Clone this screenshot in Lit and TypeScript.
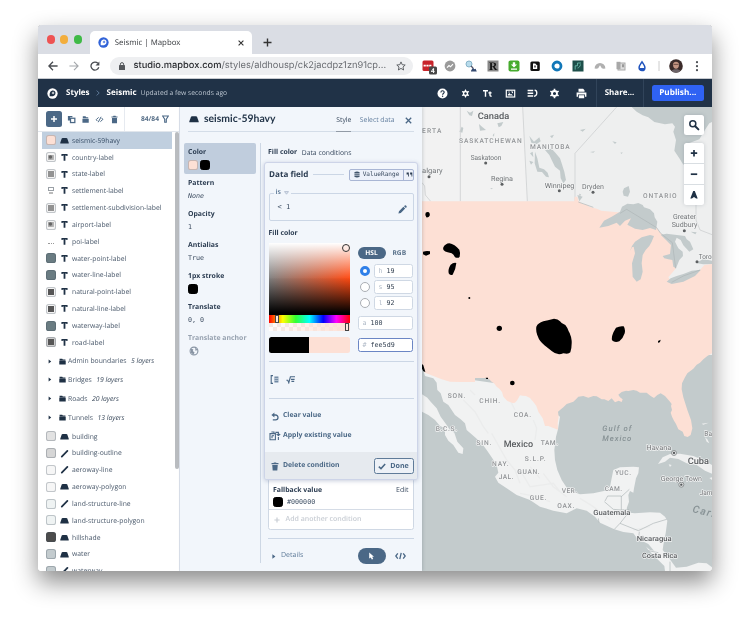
import { LitElement, html, svg, css } from "lit";
import { customElement } from "lit/decorators.js";

const glyph: Record<string, any> = {
  fill: svg`<path d="M3 2.2h4q.8 0 1.1.7L9.7 7.4v.9H.3v-.9L1.9 2.9q.3-.7 1.1-.7z" fill="#1f3145"/>`,
  text: svg`<path d="M1.6 1.2h6.8v2.1H7.2L6.9 2.8H6v5.8H4V2.8H3.1l-.3.5H1.6z" fill="#1f3145"/>`,
  line: svg`<path d="M2 8.4 8.2 2.2" stroke="#1f3145" stroke-width="2" stroke-linecap="round"/>`,
  folder: svg`<path d="M.8 1h3.8l.9 1.1h3.7v1.3H.8zM.4 4h9.2v5.2H.4z" fill="#1f3145"/>`,
};
const icon = (k: string, size = 9) => html`<svg width=${size} height=${size} viewBox="0 0 10 10">${glyph[k]}</svg>`;

type Layer = [string, string, string, string];
const layersTop: Layer[] = [
  ["seismic-59havy", "fill", "pink", ""],
  ["country-label", "text", "light-sw", "in-mark"],
  ["state-label", "text", "light-sw", "in-mid"],
  ["settlement-label", "text", "bare", "in-shield"],
  ["settlement-subdivision-label", "text", "light-sw", "in-mid"],
  ["airport-label", "text", "light-sw", "in-mark"],
  ["poi-label", "text", "bare", "in-dots"],
  ["water-point-label", "text", "teal", ""],
  ["water-line-label", "text", "teal", ""],
  ["natural-point-label", "text", "light-sw", "in-dark"],
  ["natural-line-label", "text", "light-sw", "in-dark"],
  ["waterway-label", "text", "teal", ""],
  ["road-label", "text", "grey-sw", "in-dark"],
];
const folders = [["Admin boundaries", "5 layers"], ["Bridges", "19 layers"], ["Roads", "20 layers"], ["Tunnels", "13 layers"]];
const layersEnd: Layer[] = [
  ["building", "fill", "g1", ""],
  ["building-outline", "line", "g2", ""],
  ["aeroway-line", "line", "g3", ""],
  ["aeroway-polygon", "fill", "g3", ""],
  ["land-structure-line", "line", "g4", ""],
  ["land-structure-polygon", "fill", "g4", ""],
  ["hillshade", "fill", "g5", ""],
  ["water", "fill", "g6", ""],
  ["waterway", "line", "g6", ""],
];

@customElement("map-view")
class MapView extends LitElement {
  static styles = css`
    :host { display: block; position: relative; width: 290px; height: 464px; overflow: hidden; }
    svg { display: block; }
    text { font-family: Roboto, "Open Sans", sans-serif; text-rendering: geometricPrecision; paint-order: stroke; stroke: #f3f4f4; stroke-width: 4px; stroke-linejoin: round; }
    .st { font-size: 20px; fill: #929497; font-weight: 500; }
    .city { font-size: 21px; fill: #707376; }
    .country { font-size: 27px; fill: #5a5d60; font-weight: 500; }
    .small { font-size: 21.5px; fill: #5a5d60; font-weight: 500; }
    .sea { font-size: 23px; fill: #869194; font-style: italic; stroke: none; font-weight: 500; }
    .big { font-size: 31px; }
    .ctl { position: absolute; right: 8px; width: 20px; background: #fff; border-radius: 2.5px; box-shadow: 0 0 4px rgba(30, 50, 70, .18); display: grid; }
    .ctl svg { width: 20px; height: 20px; }
    .search { top: 8px; }
    .zoom { top: 36px; }
    .zoom svg + svg { border-top: 1px solid #d9dee2; }
  `;
  t(c: string, x: number, y: number, w: number, s: string) {
    return svg`<text class=${c} x=${x} y=${y} textLength=${w} lengthAdjust=${c === "st" || c === "sea" ? "spacing" : "spacingAndGlyphs"}>${s}</text>`;
  }
  render() {
    const dots = [[197, 189], [246, 253], [27, 230], [418, 272], [519, 277], [793, 392], [831, 485]];
    return html`
      <svg width="290" height="464" viewBox="6 21 870 1392">
        <rect x="0" y="0" width="880" height="780" fill="#eeefef"/>
        <path d="M121 21H308L322 304H6V21z" fill="#f2f2f2"/>
        <rect x="0" y="765" width="880" height="660" fill="#c3cbcc"/>
        <g fill="#c3cbcc">
          <path d="M635 21 650 35 668 46 685 52 703 66 735 73 757 70 765 80 760 95 768 120 763 152 778 175 790 194 800 185 806 130 838 118 860 82 868 70 876 66V21z"/>
          <path d="M375 150 395 146 406 158 420 175 425 190 433 215 438 240 430 250 422 235 420 212 405 200 395 180 388 165z"/>
          <path d="M328 108 342 125 358 112 362 124 350 132 334 128zM345 155 352 175 358 203 372 208 383 218 387 232 378 230 366 216 352 215 344 190z"/>
          <path d="M140 32 150 38 160 32 156 48 148 46zM232 70 250 66 244 78 236 82zM177 72 186 80 198 90 180 92zM125 80 130 84 127 98 118 95zM480 90 497 86 488 95zM510 156 525 154 520 158zM577 124 590 127 585 132zM612 265 626 258 630 275 624 290 611 287 608 275zM390 108 402 104 396 115zM218 106 223 99 222 110zM330 160 338 155 340 172zM328 182 340 186 333 194zM601 158 608 157 605 162zM210 265 218 264 216 268z"/>
        </g>
        <path d="M121 21V304M308 21 322 304M590 21 465 160V304M6 248 14 258 16 285 32 304M828 310V360L840 390 876 404" fill="none" stroke="#cfd1d2" stroke-width="2.5"/>
        <path d="M10 812 90 830 300 860 420 950 414 988 408 1010 403 1050 405 1080 412 1110 425 1140 445 1170 480 1183 520 1180 555 1172 570 1160 575 1135 580 1110 600 1102 640 1100 657 1102 655 1120 648 1135 642 1165 640 1178 630 1173 625 1185 627 1205 620 1225 628 1238 645 1240 690 1237 720 1238 735 1250 742 1262 737 1300 730 1335 728 1350 740 1365 755 1385 768 1403 800 1400 835 1388 860 1390 876 1402V1413H735L733 1398 705 1370 685 1350 672 1330 655 1320 640 1300 610 1296 583 1288 540 1268 525 1250 500 1232 470 1225 440 1240 400 1232 360 1220 330 1200 290 1185 260 1165 235 1148 225 1130 235 1118 230 1095 215 1072 200 1050 185 1030 165 1012 140 990 135 970 122 958 105 945 85 915 70 905 62 880 52 870 50 848 40 835 15 828z" fill="#f1f2f2"/>
        <path d="M6 883 22 893 32 905 50 925 62 950 80 975 90 990 103 998 112 1025 130 1045 128 1062 115 1058 100 1035 85 1022 75 1005 75 985 60 978 45 960 25 945 6 935z" fill="#f1f2f2"/>
        <path d="M714 1092 728 1072 750 1062 780 1061 820 1068 850 1080 876 1095V1121L855 1112 830 1095 800 1090 775 1077 750 1073 735 1085zM746 1093 755 1095 750 1101zM855 1012 862 1018 868 1030 860 1025zM868 1134 876 1132V1140zM845 971 866 968 850 974z" fill="#eff0f0"/>
        <path d="M660 1320 685 1332 702 1352 690 1350 672 1335z" fill="#c3cbcc"/>
        <path d="M130 900 165 935 190 980 205 1000M340 960 350 985 345 1020M215 1000 260 1080 285 1110 300 1150M300 1110 330 1160 400 1150 420 1175M370 1120 400 1160 440 1190M300 1180 350 1190 390 1205M480 1195 520 1220 570 1260M270 900 285 930M150 870 165 885M640 1290 690 1280M330 1100 360 1135" fill="none" stroke="#ebecec" stroke-width="4"/>
        <path d="M6 304H463L464 290H472L476 304 488 312 500 314 508 320 530 326 544 332 560 334 585 336 610 338 620 328 710 385 722 400 757 425 768 505 745 532 755 547 838 512 853 495 876 492V760L862 768 850 778 840 788 830 794 820 806 812 812 802 820 795 832 786 850 785 868 790 892 802 930 813 960 817 985 812 1005 803 1011 793 1008 788 995 775 988 768 972 762 962 756 950 752 938 756 930 753 918 755 912 750 905 735 888 722 880 712 885 702 894 692 888 680 878 660 878 650 872 640 870 625 873 618 872 605 876 595 884 600 892 608 898 605 906 596 902 585 907 575 895 565 903 553 898 545 898 530 889 520 888 505 893 490 888 475 890 468 898 460 905 440 912 430 922 420 930 414 935 416 950 413 970 414 989 398 983 385 978 375 978 368 955 355 935 349 918 343 910 330 894 318 888 308 887 300 886 292 900 285 908 278 909 262 903 250 890 246 876 238 866 230 860 222 850 215 845 206 836 200 834 165 834V846H120L90 845 65 838 15 818 6 805z" fill="#fde0d5"/>
        <g fill="#c3cbcc">
          <path d="M538 383 552 362 575 350 600 335 606 320 622 311 640 313 655 309 668 315 672 322 690 328 702 340 704 352 712 365 708 390 690 384 668 390 645 386 622 374 628 364 633 355 615 362 600 378 590 368 565 378z"/>
          <path d="M702 408 695 425 688 438 677 450 668 465 665 490 668 515 662 538 650 545 638 530 636 490 645 460 641 440 636 442 630 453 636 438 645 425 665 412 690 405z"/>
          <path d="M722 404 740 401 795 408 800 418 810 425 820 448 808 455 790 436 782 420 770 413 765 425 775 445 788 455 789 468 778 480 768 505 760 500 757 480 745 478 733 475 728 468 750 462 753 435 738 420z"/>
          <path d="M740 545 752 535 770 528 790 522 815 512 843 509 825 528 790 545 755 552z"/>
          <path d="M828 489 850 477 876 482V492L850 493zM812 395 830 397 826 403zM472 285 488 290 478 304zM477 281 483 283 480 290z"/>
        </g>
        <path d="M600 340 620 328 710 383 722 400 757 428 767 505M755 547 790 528 840 510M475 306 520 322M555 1203 563 1188H604V1230L580 1228 553 1205M604 1190 628 1168M604 1230 625 1228M583 1288 600 1270 620 1245 626 1228M600 1270 655 1292 670 1285 700 1270 740 1258M655 1320 658 1295M685 1352 715 1358M750 1385V1413M535 1255 537 1268" fill="none" stroke="#aeb5b7" stroke-width="2"/>
        <g fill="#000">
          <path d="M17 338Q22 334 27 337 31 342 29 347 26 353 19 352 14 344 17 338zM9 455Q20 451 30 454V462L18 467 9 463zM70 442Q76 431 88 430 104 433 118 449 122 458 119 470 115 476 105 472 101 463 95 460L83 457Q66 453 70 442zM92 494Q100 487 109 489 108 505 98 524 90 528 86 520 83 508 92 494z"/>
          <path d="M349 680Q354 669 370 664L402 656Q414 656 420 664 424 671 436 675 442 682 446 694 453 705 455 722 456 742 451 757 446 764 430 760 412 768 396 754L375 737Q358 724 353 708 347 695 349 680z"/>
          <path d="M588 683Q600 677 611 679 617 688 614 700 609 716 598 724 584 729 576 721 573 706 588 683zM714 723 722 719 720 726 715 729zM6 792 10 796 16 816 10 814 6 806z"/>
          <circle cx="238" cy="685" r="8"/><circle cx="148" cy="594" r="3"/><circle cx="277" cy="849" r="7"/><path d="M197 833h7v4h-5z"/>
        </g>
        <g fill="#5d6062">${dots.map(([x, y]) => svg`<circle cx=${x} cy=${y} r="4.5"/>`)}</g>
        ${[[762, 1059], [784, 1154]].map(([x, y]) => svg`<circle cx=${x} cy=${y} r="7.5" fill="#e8eaea" stroke="#6b6f71" stroke-width="2"/><circle cx=${x} cy=${y} r="3.5" fill="#55595b"/>`)}
        ${this.t("country", 173, 57, 95, "Canada")}
        ${this.t("st", 6, 100, 58, "ERTA")}
        ${this.t("st", 117, 129, 188, "SASKATCHEWAN")}
        ${this.t("st", 330, 147, 119, "MANITOBA")}
        ${this.t("st", 669, 295, 101, "ONTARIO")}
        ${this.t("city", 152, 181, 92, "Saskatoon")}
        ${this.t("city", 6, 219, 62, "algary")}
        ${this.t("city", 213, 242, 66, "Regina")}
        ${this.t("city", 374, 264, 89, "Winnipeg")}
        ${this.t("city", 486, 267, 66, "Dryden")}
        ${this.t("city", 759, 358, 69, "Greater")}
        ${this.t("city", 755, 381, 77, "Sudbury")}
        ${this.t("city", 836, 476, 66, "Toronto")}
        ${this.t("st", 83, 895, 53, "SON.")}
        ${this.t("st", 178, 908, 62, "CHIH.")}
        ${this.t("st", 281, 951, 52, "COA.")}
        ${this.t("st", 47, 993, 64, "B.C.S.")}
        ${this.t("st", 169, 1036, 45, "SIN.")}
        ${this.t("st", 362, 1035, 52, "TAM.")}
        ${this.t("st", 314, 1082, 63, "S.L.P.")}
        ${this.t("st", 216, 1097, 50, "NAY.")}
        ${this.t("st", 292, 1122, 67, "GUAN.")}
        ${this.t("st", 236, 1138, 44, "JAL.")}
        ${this.t("st", 425, 1178, 46, "VER.")}
        ${this.t("st", 329, 1199, 50, "GUE.")}
        ${this.t("st", 412, 1223, 51, "OAX.")}
        ${this.t("st", 585, 1126, 48, "YUC.")}
        ${this.t("st", 554, 1173, 52, "CAM.")}
        ${this.t("country", 251, 1041, 88, "Mexico")}
        ${this.t("country", 803, 1091, 64, "Cuba")}
        ${this.t("sea", 547, 992, 87, "Gulf of")}
        ${this.t("sea", 547, 1024, 87, "Mexico")}
        ${this.t("city", 679, 1050, 75, "Havana")}
        ${this.t("city", 722, 1143, 124, "George Town")}
        ${this.t("city", 853, 1007, 82, "Bahamas")}
        ${this.t("city", 839, 1184, 74, "Jamaica")}
        ${this.t("small", 520, 1245, 111, "Guatemala")}
        ${this.t("small", 650, 1323, 105, "Nicaragua")}
        ${this.t("small", 666, 1373, 106, "Costa Rica")}
        <text class="sea big" x="816" y="1236" letter-spacing="4" transform="rotate(14 816 1236)">Caribbean</text>
      </svg>
      <div class="ctl search"><svg viewBox="0 0 20 20" fill="none" stroke="#1f3145"><circle cx="8.8" cy="8.8" r="3" stroke-width="1.5"/><path d="m11.2 11.2 3.2 3.2" stroke-width="2" stroke-linecap="round"/></svg></div>
      <div class="ctl zoom">
        <svg viewBox="0 0 20 20"><path d="M10 7v6.4M6.8 10.2h6.4" stroke="#1f3145" stroke-width="1.7"/></svg>
        <svg viewBox="0 0 20 20"><path d="M6.8 10.2h6.4" stroke="#1f3145" stroke-width="1.7"/></svg>
        <svg viewBox="0 0 20 20"><path d="M9.2 6h1.6l2.9 7.6h-1.6L10 12l-2.1 1.6H6.3z" fill="#1f3145"/></svg>
      </div>`;
  }
}

@customElement("app-root")
class AppRoot extends LitElement {
  static styles = css`
    :host { display: block; width: 750px; height: 621px; background: #fff; overflow: hidden; font: 7px/10px "Open Sans", "Noto Sans", sans-serif; color: #3a4b60; text-rendering: geometricPrecision; }
    * { box-sizing: border-box; }
    svg { display: block; flex: none; }
    .row { display: flex; align-items: center; white-space: nowrap; }
    .mono { font-family: "DejaVu Sans Mono", monospace; }
    .window { margin: 25px 0 0 38px; width: 674px; height: 546px; border-radius: 4px 4px 3px 3px; overflow: hidden; background: #fff; }
    .shade { width: 750px; height: 621px; overflow: hidden; }
    .frame { display: flex; width: 712px; height: 571px; filter: drop-shadow(0 0 .6px rgba(0, 0, 0, .4)) drop-shadow(0 11px 12px rgba(0, 0, 0, .46)); }
    .tabs { height: 29px; background: #dadde4; padding-left: 8.5px; }
    .tabs.row { align-items: flex-end; }
    .lights { gap: 5.4px; height: 29px; }
    .light { width: 8.2px; height: 8.2px; border-radius: 50%; background: #ee5353; }
    .light.y { background: #f3ae3d; }
    .light.g { background: #3fba47; }
    .tab { margin-left: 8.5px; width: 162px; height: 23px; background: #fff; border-radius: 5px 5px 0 0; padding: 0 8px 0 8px; color: #44474b; }
    .tab .name { margin-left: 5.5px; flex: 1; font: 7.8px/12px "Noto Sans", sans-serif; }
    .plus { margin: 0 0 6.6px 10.5px; }
    .url { height: 25px; background: #fff; border-bottom: 1px solid #c8cbd0; padding: 0 9px 0 10px; }
    .nav { gap: 11px; }
    .omni { margin-left: 9.5px; height: 18px; width: 304px; background: #eeeff1; border-radius: 9px; padding: 0 7px 0 9px; }
    .addr { flex: 1; margin-left: 9px; font: 9.3px/14px Inter, "Open Sans", sans-serif; color: #6a6d72; }
    .addr b { font-weight: 500; color: #2a2c30; }
    .ext { margin-left: 9.5px; gap: 9.4px; }
    .ext svg { overflow: visible; }
    .avatar { margin-left: -.5px; }
    .more { margin-left: -1px; }
    .top { height: 28px; background: #203247; color: #fff; padding-left: 8.5px; font-weight: 700; font-size: 8px; }
    .top .st1 { margin-left: 8.5px; }
    .crumb { margin: 0 6.5px; }
    .top .upd { font-weight: 400; font-size: 6.75px; color: #bcc6d1; margin-left: 4px; }
    .tools { margin-left: auto; }
    .tools svg { margin-right: 11.4px; }
    .tools svg.gear { margin-right: 15.2px; }
    .tools svg.print { margin-right: 9px; }
    .share { height: 28px; width: 48px; justify-content: center; border-left: 1px solid #31445a; border-right: 1px solid #31445a; }
    .pub { margin: 0 8px; width: 52.5px; height: 16px; border-radius: 2.5px; background: #2f62f3; justify-content: center; font-size: 8.2px; }
    .body { display: flex; height: 464px; }
    .left { width: 142px; height: 464px; border-right: 1.5px solid #dde3ec; overflow: hidden; background: #fff; }
    .bar { height: 25px; border-bottom: 1.5px solid #e1e6ec; padding-left: 8px; }
    .add { width: 16px; height: 16px; border-radius: 2.5px; background: #4b6886; display: grid; place-items: center; }
    .bar .ic { gap: 5.2px; margin-left: 5px; padding-right: 5px; height: 24px; border-right: 1px solid #e6eaf0; }
    .count { margin-left: auto; gap: 3px; color: #587089; font-weight: 700; font-size: 6.7px; margin-right: 10px; }
    .scroller { display: flex; height: 440px; }
    .layers { width: 137px; }
    .thumb { width: 4px; height: 337px; background: #b9bcc0; border-radius: 2px; }
    .layer { height: 16.84px; margin-left: 4px; width: 129.5px; padding-left: 4px; font-size: 6.8px; color: #4a596b; }
    .layer > span:last-child, .fold span, .fold i { padding-top: .6px; }
    .layer svg { margin: 0 3.5px; }
    .layer.sel { background: #c0cfdf; color: #344a63; }
    .fold { height: 18.85px; padding-left: 10px; font-size: 6.8px; color: #4a596b; gap: 2px; }
    .fold i { margin-left: 2.5px; color: #3c4b5d; }
    .folders { margin: .9px 0; }
    .folders svg + svg { margin: 0 0 0 5px; }
    .sw { width: 10px; height: 10px; border-radius: 2.6px; border: .8px solid rgba(60, 75, 90, .28); display: grid; place-items: center; flex: none; }
    .sw.pink { background: #fde0d5; } .sw.light-sw { background: #f4f4f4; } .sw.grey-sw { background: #cfcfcf; }
    .sw.bare { border-color: transparent; } .sw.teal { background: #6a7c82; } .sw.g1 { background: #e2e2e2; }
    .sw.g2 { background: #d6d6d6; } .sw.g3 { background: #f6f6f6; } .sw.g4 { background: #eff3f3; }
    .sw.g5 { background: #4c4c4c; } .sw.g6 { background: #c3cbce; } .sw.black { background: #000; border-color: #000; }
    .in { width: 6px; height: 6px; }
    .in-mid { background: #929292; }
    .in-dark { background: #565656; }
    .in-mark { background: radial-gradient(circle at 40% 40%, #666 25%, #a9a9a9 45%, #c4c4c4); height: 5px; }
    .in-dots { height: 3px; border-bottom: 1px dotted #999; margin-top: 3px; }
    .in-shield { border: 1px solid #9aa0a6; height: 4px; margin-top: -4px; box-shadow: 0 4px 0 -1px #bbb; }
    .panel { width: 242px; background: #f2f6fb; padding: 0 8px; position: relative; z-index: 2; box-shadow: 1px 0 3px rgba(40, 60, 80, .18); }
    .head { height: 25px; border-bottom: 1.5px solid #d4dde8; padding-left: 1px; }
    .title { font: 700 10.4px/14px Lato, "Open Sans", sans-serif; color: #233549; margin-left: 5px; }
    .head .st { margin-left: auto; height: 25px; border-bottom: 1.8px solid #929ba6; display: flex; align-items: center; padding-top: 2px; font-size: 6.8px; }
    .head .sd { color: #6580a0; margin: 0 10px 0 8.5px; padding-top: 1px; font-size: 6.8px; }
    .close { margin: 3px 2.5px 0 0; }
    .cols { display: flex; padding-top: 11px; }
    .props { width: 73px; height: 420px; border-right: 1.3px solid #cdd7e4; }
    .prop { height: 31px; padding: 5.2px 0 0 0; }
    .prop.on { width: 72px; margin-left: -4px; padding-left: 4px; background: #c0cddd; border-radius: 2px; }
    .prop b, .dk { color: #2b3c51; font-size: 6.9px; font-weight: 700; display: block; }
    .prop .v { height: 12px; margin-top: .8px; font-size: 6.7px; gap: 2px; color: #3c4c60; }
    .prop.off b { color: #97a2b0; }
    .right { width: 146px; margin-left: 6.5px; }
    .cond { height: 19px; gap: 4.5px; font-size: 6.8px; padding: 1px 0 0 .5px; }
    .card { margin: 0 -4px 0 -3.5px; height: 318px; width: 154px; background: #f2f6fb; border: 1px solid #cdd4e8; border-radius: 3px; box-shadow: 0 1px 4px rgba(70, 90, 140, .3); padding: 0 3.5px; position: relative; z-index: 2; overflow: hidden; }
    .df { height: 23px; gap: 4.5px; }
    .df b { font-size: 8.1px; color: #2b3c51; margin-left: .5px; }
    .hr { flex: 1; height: 1px; background: #cbd6e5; }
    .vr { height: 12px; width: 65px; border: 1px solid #a9b6d4; border-radius: 2px; background: #edf1fa; font-size: 6.1px; padding-left: 4px; gap: 3.2px; }
    .vr .q { border-left: 1px solid #a9b6d4; height: 10px; padding: 0 2px; margin-left: auto; display: grid; place-items: center; }
    .field { margin-top: 6.5px; height: 28px; border: 1.2px solid #cbd6e5; border-radius: 2px; padding: 0 6px 0 8px; position: relative; }
    .legend { position: absolute; left: 4px; top: -6px; background: #f2f6fb; padding: 0 2px; gap: 3px; color: #52708f; font-weight: 600; }
    .field > svg { margin: 5px 0 0 auto; }
    .fc { height: 22.5px; padding-top: 8px; }
    .picker { display: flex; gap: 8px; }
    .sv { width: 81px; height: 72px; position: relative; background: linear-gradient(to top, #000 3%, rgba(0, 0, 0, 0) 52%), linear-gradient(to bottom, #fff, rgba(255, 255, 255, 0) 50%), linear-gradient(to right, #808080, #ff4a12); }
    .cursor { position: absolute; right: 0; top: 1px; width: 8px; height: 8px; border: 1.3px solid #333; border-radius: 50%; background: rgba(255, 235, 228, .6); }
    .hue { height: 8px; position: relative; background: linear-gradient(to right, #f00, #ff0 17%, #3f3 33%, #0ff 50%, #00f 67%, #f0f 83%, #f00); }
    .alpha { height: 8px; position: relative; background: linear-gradient(to right, rgba(253, 224, 213, .1), #fde0d5), repeating-conic-gradient(#fff 0 25%, #f2ebe8 0 50%) 0 0 / 8px 8px; }
    .knob { position: absolute; left: 6px; top: 0; height: 8px; width: 4px; border: 1px solid #444; background: #fde9df; }
    .alpha .knob { left: 76px; }
    .pair { height: 16px; margin-top: 6px; border-radius: 2.5px; background: linear-gradient(to right, #000 50%, #fde0d5 0); }
    .ctr { width: 55.5px; padding-top: 3.5px; }
    .modes { height: 12.5px; color: #587089; font-weight: 700; font-size: 6.6px; gap: 7px; margin-bottom: 4px; }
    .pill { width: 28px; height: 12.5px; border-radius: 7px; background: #4b6886; color: #fff; display: grid; place-items: center; }
    .inp { height: 14px; border: 1.2px solid #cfd8e4; border-radius: 2.5px; background: #fff; font-size: 6.7px; padding-left: 4px; gap: 4px; flex: 1; color: #2f3d4e; }
    .inp span { color: #b0bac7; }
    .hs { height: 16.1px; gap: 4px; margin-left: 2px; }
    .rad { width: 10px; height: 10px; border: 1.2px solid #aaaeb4; border-radius: 50%; background: #fff; flex: none; }
    .rad.on { border: 3.6px solid #2f7fe8; }
    .inp.a { margin-top: 5px; flex: none; }
    .inp.hex { margin-top: 7.5px; border-color: #6b86c4; }
    .line { height: 1.2px; background: #cbd6e5; }
    .l1 { margin-top: 7.5px; }
    .modes2 { height: 36px; gap: 7px; padding: 0 0 1px 1px; }
    .l2 { margin-bottom: 7px; }
    .act { color: #4b6886; font-weight: 700; font-size: 6.85px; gap: 4.5px; height: 20.4px; padding-left: 2px; }
    .act.wide { gap: 2.5px; padding-left: 0; }
    .foot { margin: 5px -3.5px 0; padding: 0 3.5px; height: 29px; background: #e6eaef; justify-content: space-between; }
    .done { width: 40px; height: 16px; border: 1.2px solid #5f7b99; border-radius: 2.5px; background: #edf1f7; color: #4b6886; font-weight: 700; font-size: 7.1px; justify-content: center; gap: 4px; }
    .fall { width: 146px; height: 52px; margin-top: -2px; background: #fff; border: 1.2px solid #cfd8e4; border-radius: 2.5px; }
    .f1 { padding: 7px 4px 0 4.5px; height: 16px; justify-content: space-between; }
    .f2 { padding: 0 4px; gap: 4.5px; font-size: 6.7px; height: 15px; border-bottom: 1.2px solid #d5dce6; }
    .f3 { padding-left: 5px; gap: 6px; height: 19px; color: #c8cdd4; font-weight: 600; font-size: 7px; }
    .l3 { margin-top: 7.5px; }
    .det { height: 35px; padding: 0 8px 0 4.5px; color: #5f7b99; gap: 5px; }
    .ptr { width: 28.5px; height: 16px; border-radius: 8px; background: #4b6886; display: grid; place-items: center; margin: 0 3.5px 0 auto; }
  `;
  layer([n, k, c, i]: Layer, sel = false) {
    return html`<div class="row layer ${sel ? "sel" : ""}"><span class="sw ${c}">${i ? html`<span class="in ${i}"></span>` : ""}</span>${icon(k)}<span>${n}</span></div>`;
  }
  prop(n: string, v: unknown, cls = "") {
    return html`<div class="prop ${cls}"><b>${n}</b><div class="row v mono">${v}</div></div>`;
  }
  render() {
    const mb = (bg: string, fg: string) => svg`<circle cx="6" cy="6" r="5.6" fill=${bg}/><path d="M3 9c-.6-4 1-6.3 3.6-6.3 1.6 0 2.7 1.2 2.7 2.7C9.3 8 6.6 9.6 3 9z" fill=${fg}/><path d="m6.6 3.6.6 1.2 1.2.6-1.2.6-.6 1.2L6 6l-1.2-.6L6 4.8z" fill=${bg}/>`;
    const d = "#1f3145", s = "#4b6886";
    return html`<div class="shade"><div class="frame"><div class="window">
      <div class="row tabs">
        <div class="row lights"><span class="light"></span><span class="light y"></span><span class="light g"></span></div>
        <div class="row tab"><svg width="11" height="11" viewBox="0 0 12 12">${mb("#3163d8", "#fff")}</svg><span class="name">Seismic | Mapbox</span>
          <svg width="6" height="6" viewBox="0 0 6 6"><path d="m.6.6 4.8 4.8m0-4.8L.6 5.4" stroke="#333" stroke-width="1.1"/></svg></div>
        <svg class="plus" width="9" height="9" viewBox="0 0 9 9"><path d="M4.5.5v8m-4-4h8" stroke="#333" stroke-width="1.4"/></svg>
      </div>
      <div class="row url">
        <div class="row nav">
          <svg width="10" height="10" viewBox="0 0 10 10" fill="none" stroke="#4a4d52" stroke-width="1.3"><path d="M9.6 5H1M5 .8.9 5 5 9.2"/></svg>
          <svg width="10" height="10" viewBox="0 0 10 10" fill="none" stroke="#a4a7ab" stroke-width="1.1"><path d="M.4 5H9M5 .8 9.1 5 5 9.2"/></svg>
          <svg width="10" height="10" viewBox="0 0 10 10"><path d="M8.8 6.3A4 4 0 1 1 7.9 2.3" fill="none" stroke="#4a4d52" stroke-width="1.3"/><path d="M9.4.4v4H5.5z" fill="#4a4d52"/></svg>
        </div>
        <div class="row omni">
          <svg width="6" height="8" viewBox="0 0 6 8"><rect y="3" width="6" height="5" rx=".6" fill="#55585c"/><path d="M1.4 3.2V2.2a1.6 1.6 0 0 1 3.2 0v1" fill="none" stroke="#55585c"/></svg>
          <span class="addr"><b>studio.mapbox.com</b>/styles/aldhousp/ck2jacdpz1zn91cp...</span>
          <svg width="10" height="10" viewBox="0 0 10 10"><path d="m5 .9 1.2 2.8 3 .3L7 6l.6 3L5 7.4 2.4 9 3 6 .8 4l3-.3z" fill="none" stroke="#55585c" stroke-width=".9"/></svg>
        </div>
        <div class="row ext">
          <svg width="12" height="12" viewBox="0 0 12 12"><rect x=".5" y=".5" width="11" height="10.5" rx="1.5" fill="#c8242b"/><path d="M1.6 5.6h8.2" stroke="#fff" stroke-width="1.8" stroke-dasharray="2.2 .6"/><rect x="7" y="6.5" width="8" height="8" rx="1.5" fill="#474747"/><text x="9.1" y="12.9" font-size="6.5" font-weight="700" fill="#fff">4</text></svg>
          <svg width="12" height="12" viewBox="0 0 12 12"><circle cx="6" cy="6" r="5.4" fill="#9a9a9a"/><path d="m3 7.6 2-2 1.5 1.2L9 4.2" fill="none" stroke="#fff" stroke-width="1.2"/></svg>
          <svg width="12" height="12" viewBox="0 0 12 12"><circle cx="4" cy="4" r="3" fill="#b9dcec" stroke="#86b3c9"/><path d="m6 6 2 2" stroke="#556" stroke-width="1.3"/><path d="M6 10.8 8 7.4l1.3 1.8 1.3-.5 1.2 2.8H6z" fill="#34496f"/></svg>
          <svg width="12" height="12" viewBox="0 0 12 12"><rect x=".5" y=".5" width="11" height="11" fill="#878787"/><text x="2" y="10.2" font-family="Liberation Serif" font-size="11.5" font-weight="700" fill="#111">R</text></svg>
          <svg width="12" height="12" viewBox="0 0 12 12"><rect x=".5" y=".5" width="11" height="11" rx="2" fill="#46ab2e"/><path d="M4.8 2.2h2.4v2.4h1.9L6 7.6 2.9 4.6h1.9zM3 8.4h6v1.4H3z" fill="#fff"/></svg>
          <svg width="12" height="12" viewBox="0 0 12 12"><rect x="1.4" y="1.4" width="9.4" height="9.6" rx="1.5" fill="#111"/><path d="M4 3.6h2.2L8.2 5.6V9H4z" fill="#fff"/><path d="M5.4 5.6h1.2v1.8H5.4z" fill="#111"/></svg>
          <svg width="12" height="12" viewBox="0 0 12 12"><circle cx="6" cy="6" r="4" fill="none" stroke="#1177b8" stroke-width="2.8"/></svg>
          <svg width="12" height="12" viewBox="0 0 12 12"><rect x=".5" y=".5" width="11" height="11" fill="#1d4f4a"/><path d="M3.2 9.6V5.8h2.3V3H9M5.6 8c1.6-.4 2.4-1.6 3-3.6" fill="none" stroke="#69b8a8" stroke-width=".9"/></svg>
          <svg width="12" height="12" viewBox="0 0 12 12"><path d="M.6 8.4A5.4 5.4 0 0 1 11.4 8.4L9.6 8.8 7.8 8.2 6 5.2 4.2 8.2 2.4 8.8z" fill="#b0b0b0"/></svg>
          <svg width="12" height="12" viewBox="0 0 12 12"><rect x="3" y="3" width="7" height="7" fill="#ddd" stroke="#aaa"/><rect x="1.5" y="1.8" width="4" height="7.4" fill="#a8a8a8"/><path d="M7 4.3h2v3H7z" fill="#999"/></svg>
          <svg width="12" height="12" viewBox="0 0 12 12"><path d="M6 1.8C7.4 4 8.9 5.6 8.9 7.7a2.9 2.9 0 0 1-5.8 0C3.1 5.6 4.6 4 6 1.8z" fill="none" stroke="#2054bd" stroke-width="1.5"/><path d="M3.5 8h5a2.5 2.5 0 0 1-5 0z" fill="#2054bd"/></svg>
          <svg width="2" height="12" viewBox="0 0 2 12"><path d="M1 1v10" stroke="#ccc"/></svg>
          <svg class="avatar" width="14" height="14" viewBox="0 0 14 14"><circle cx="7" cy="7" r="6.8" fill="#3b2b2a"/><path d="M4 5.2C4 1.8 10 1.8 10 5.2 10 8.6 8.6 9.8 7 9.8S4 8.6 4 5.2z" fill="#c39482"/><path d="M4.4 5.4h5.2" stroke="#5e4038" stroke-width=".8"/><path d="M2.6 12c1-2.4 7.8-2.4 8.8 0a6.8 6.8 0 0 1-8.8 0z" fill="#6d6468"/></svg>
          <svg class="more" width="12" height="12" viewBox="0 0 12 12" fill="#4a4d52"><circle cx="6" cy="2.2" r="1.1"/><circle cx="6" cy="6.2" r="1.1"/><circle cx="6" cy="10.2" r="1.1"/></svg>
        </div>
      </div>
      <div class="row top">
        <svg width="11" height="11" viewBox="0 0 12 12">${mb("#fff", d)}</svg>
        <span class="st1">Styles</span>
        <svg class="crumb" width="4" height="6" viewBox="0 0 4 6"><path d="M.6.6 3.2 3 .6 5.4" fill="none" stroke="#5b7593"/></svg>
        <span>Seismic</span><span class="upd">Updated a few seconds ago</span>
        <div class="row tools">
          <svg width="11" height="11" viewBox="0 0 11 11"><circle cx="5.5" cy="5.5" r="5" fill="#fff"/><path d="M3.9 4.4c0-2.2 3.3-2.1 3.3-.1 0 1.2-1.6 1.2-1.6 2.4" fill="none" stroke="${d}" stroke-width="1.1"/><circle cx="5.6" cy="8.2" r=".7" fill="${d}"/></svg>
          <svg width="11" height="11" viewBox="0 0 11 11"><path d="m5.5 1 1.2 2.2 2.5-.3-1.3 2.6 1.3 2.6-2.5-.3L5.5 10 4.3 7.8l-2.5.3 1.3-2.6-1.3-2.6 2.5.3z" fill="#fff"/><circle cx="5.5" cy="5.5" r="1.2" fill="${d}"/></svg>
          <svg width="11" height="11" viewBox="0 0 11 11"><path d="M1 2.8h5M3.5 2.8v6M8 3.4v3.9q0 1 1.6 1M6.4 4.9h3.2" fill="none" stroke="#fff" stroke-width="1.4"/></svg>
          <svg width="11" height="11" viewBox="0 0 11 11"><rect x="1.3" y="2.2" width="8.4" height="6.8" fill="none" stroke="#fff" stroke-width="1.2"/><path d="M2.8 7.6v-1L4.4 5l1.4 1.4.6-.4L8 7.6zM3.4 3.4h1.2v1.2H3.4zM6 3.4h2v2L6.8 4.6z" fill="#fff"/></svg>
          <svg width="11" height="11" viewBox="0 0 11 11"><path d="M.6 2.4h5.6M.6 5.2h5.6M.6 8h5.6" stroke="#fff" stroke-width="1.5"/><path d="M7.6 2.2q2.4.3 2.2 3-.2 2.6-2.8 3.2" fill="none" stroke="#fff" stroke-width="1.3"/></svg>
          <svg class="gear" width="11" height="11" viewBox="0 0 11 11"><circle cx="5.5" cy="5.5" r="2.5" fill="none" stroke="#fff" stroke-width="1.8"/><path d="M5.5.8v1.8M5.5 8.4v1.8M1.4 3.1l1.6 1M8 6.9l1.6 1M1.4 7.9 3 6.9M8 4.1l1.6-1" stroke="#fff" stroke-width="1.7"/></svg>
          <svg class="print" width="11" height="11" viewBox="0 0 11 11"><path d="M2.5.8h4.6l1.4 1.4v1.6h-6zM.6 4.4h9.8v4.4H9V6.4H2v2.4H.6zM2.8 7.2h5.4v3H2.8z" fill="#fff"/></svg>
        </div>
        <div class="row share">Share...</div><div class="row pub">Publish...</div>
      </div>
      <div class="body">
        <div class="left">
          <div class="row bar">
            <span class="add"><svg width="8" height="8" viewBox="0 0 8 8"><path d="M4 1v6M1 4h6" stroke="#fff" stroke-width="1.5"/></svg></span>
            <div class="row ic">
              <svg width="9" height="9" viewBox="0 0 10 10"><path d="M1 1h5v1.6H3.4V6H1z" fill="${s}"/><rect x="3.9" y="3.6" width="4.8" height="4.8" fill="none" stroke="${s}" stroke-width="1.4"/></svg>
              <svg width="9" height="9" viewBox="0 0 10 10"><path d="M2 1.4h3l.8 1.2H8v1H2zM1.6 4.2h7v4.4h-7z" fill="${s}"/></svg>
              <svg width="9" height="9" viewBox="0 0 10 10"><path d="M4 2.6 1.4 5.2l1.2 1.6M7.4 3.4 8.8 4.8 6 7.4M3.6 8 6.8 2" fill="none" stroke="${s}" stroke-width="1.1"/></svg>
              <svg width="9" height="9" viewBox="0 0 10 10"><path d="M3.8.8h2.4l.4.8H8.4v1.2H1.6V1.6h1.8zM2.2 3.4h5.6v5.8H2.2z" fill="${s}"/></svg>
            </div>
            <div class="row count"><span>84/84</span><svg width="7" height="8" viewBox="0 0 7 8"><path d="M.6 1h5.8L4.3 4.2V7.2H2.7V4.2z" fill="none" stroke="${s}" stroke-width="1.1"/></svg></div>
          </div>
          <div class="scroller"><div class="layers">
            ${layersTop.map((l, i) => this.layer(l, i === 0))}
            <div class="folders">${folders.map(([n, c]) => html`<div class="row fold"><svg width="4" height="5" viewBox="0 0 4 5"><path d="M.6.6 3.2 2.5.6 4.4z" fill="${d}"/></svg>${icon("folder", 7)}<span>${n}</span><i>${c}</i></div>`)}</div>
            ${layersEnd.map((l) => this.layer(l))}
          </div><div class="thumb"></div></div>
        </div>
        <div class="panel">
          <div class="row head">${icon("fill", 10)}<span class="title">seismic-59havy</span><span class="st">Style</span><span class="sd">Select data</span>
            <svg class="close" width="7" height="7" viewBox="0 0 7 7"><path d="m.8.8 5.4 5.4m0-5.4L.8 6.2" stroke="${s}" stroke-width="1.3"/></svg></div>
          <div class="cols">
            <div class="props">
              ${this.prop("Color", html`<span class="sw pink"></span><span class="sw black"></span>`, "on")}
              ${this.prop("Pattern", html`<i>None</i>`)}
              ${this.prop("Opacity", "1")}${this.prop("Antialias", "True")}
              ${this.prop("1px stroke", html`<span class="sw black"></span>`)}
              ${this.prop("Translate", "0, 0")}
              ${this.prop("Translate anchor", html`<svg width="11" height="10" viewBox="0 0 11 10"><circle cx="6" cy="5" r="3.9" fill="none" stroke="#8894a3" stroke-width="1.1"/><path d="M3 2.4 5.4 3.6 4.8 5l1.8 1.4L5.4 8.6 3 6.8zM7 1.4l2.4 2.4L7.6 5z" fill="#8894a3"/></svg>`, "off")}
            </div>
            <div class="right">
              <div class="row cond"><b class="dk">Fill color</b><span>Data conditions</span></div>
              <div class="card">
                <div class="row df"><b>Data field</b><span class="hr"></span>
                  <div class="row vr mono"><svg width="6" height="7" viewBox="0 0 6 7"><path d="M.4 1.2q2.6-1.4 5.2 0v.8H.4zM.4 2.6h5.2v1.2H.4zM.4 4.4h5.2v1.4q-2.6 1.2-5.2 0z" fill="#41546b"/></svg><span>ValueRange</span><span class="q"><svg width="7" height="5" viewBox="0 0 7 5"><path d="M.6.4h2.2v4.2H2V2.6H.6zM4.1.4h2.2v4.2h-.8V2.6H4.1z" fill="#2b3c51"/></svg></span></div></div>
                <div class="row field"><div class="row legend"><span>is</span><svg width="5" height="4" viewBox="0 0 5 4"><path d="M.5.6h4L2.5 3.2z" fill="#dfe6f0" stroke="#a9b6c9" stroke-width=".8"/></svg></div><span class="mono">&lt; 1</span>
                  <svg width="9" height="9" viewBox="0 0 9 9"><path d="m.4 8.6.6-2.4L5.4 1.8l1.8 1.8L2.8 8zM6 1.2l.8-.8q.6-.4 1.2.2l.4.4q.6.6.2 1.2L7.8 3z" fill="${s}"/></svg></div>
                <b class="dk fc">Fill color</b>
                <div class="picker"><div>
                  <div class="sv"><span class="cursor"></span></div><div class="hue"><span class="knob"></span></div><div class="alpha"><span class="knob"></span></div><div class="pair"></div></div>
                  <div class="ctr"><div class="row modes"><span class="pill">HSL</span><span>RGB</span></div>
                    ${[["h", "19"], ["s", "95"], ["l", "92"]].map(([k, v], i) => html`<div class="row hs"><span class="rad ${i ? "" : "on"}"></span><div class="row inp mono"><span>${k}</span>${v}</div></div>`)}
                    <div class="row inp a mono"><span>a</span>100</div><div class="row inp a hex mono"><span>#</span>fee5d9</div></div></div>
                <div class="line l1"></div>
                <div class="row modes2">
                  <svg width="9" height="9" viewBox="0 0 9 9"><path d="M3 .6H1.2v7.8H3" fill="none" stroke="${s}" stroke-width="1.1"/><path d="M4.4 1.6h4v5.8h-4z" fill="#6f88a3"/><path d="M4.4 3.4h4M4.4 5.4h4" stroke="#e8eef5" stroke-width=".6"/></svg>
                  <svg width="9" height="9" viewBox="0 0 9 9"><path d="M.4 5.2h1.4l1 2.6L4.4 1.8H9M5 4.4h3.6M5.4 6.4h2.8" fill="none" stroke="${s}" stroke-width="1.1"/></svg></div>
                <div class="line l2"></div>
                <div class="row act"><svg width="8" height="9" viewBox="0 0 8 9"><path d="M2 3h2.6a2.4 2.4 0 0 1 0 4.8H1.8" fill="none" stroke="${s}" stroke-width="1.3"/><path d="M3.4.6v4.8L.4 3z" fill="${s}"/></svg>Clear value</div>
                <div class="row act wide"><svg width="12" height="10" viewBox="0 0 12 10"><path d="M1 2.6h5.4v6.2H1zM2.4 1h2.6v1.6M3 4.6v2.6M3.4 4.6h1.4" fill="none" stroke="${s}" stroke-width="1.1"/><path d="M6.4 1.4h3v2.6M7.6 3l1.8 1.6L11.2 3M9.4 6v3" fill="none" stroke="${s}" stroke-width="1.1"/></svg>Apply existing value</div>
                <div class="row foot"><div class="row act"><svg width="8" height="9" viewBox="0 0 9 10"><path d="M3.3.4h2.4l.4.8H8.4v1.4H.6V1.2h2.3zM1.4 3.4h6.2l-.5 6.2H1.9z" fill="${s}"/></svg>Delete condition</div>
                  <div class="row done"><svg width="8" height="7" viewBox="0 0 8 7"><path d="m.8 3.6 2.2 2L7.2 1" fill="none" stroke="${s}" stroke-width="1.5"/></svg>Done</div></div>
              </div>
              <div class="fall"><div class="row f1"><b class="dk">Fallback value</b><span>Edit</span></div>
                <div class="row f2 mono"><span class="sw black"></span>#000000</div>
                <div class="row f3"><svg width="6" height="6" viewBox="0 0 6 6"><path d="M3 .4v5.2M.4 3h5.2" stroke="#c8cdd4" stroke-width="1.2"/></svg>Add another condition</div></div>
              <div class="line l3"></div>
              <div class="row det"><svg width="4" height="5" viewBox="0 0 4 5"><path d="M.4.3 3.4 2.5.4 4.7z" fill="${s}"/></svg>Details
                <span class="ptr"><svg width="7" height="8" viewBox="0 0 7 8"><path d="M1.2.4 6 4.8H4.2l1 2.2-1.4.6-1-2.2-1.6 1.2z" fill="#fff"/></svg></span>
                <svg width="11" height="8" viewBox="0 0 11 8"><path d="M2.8 1.4.8 4l2 2.6M8.2 1.4l2 2.6-2 2.6M6.2.8 4.8 7.2" fill="none" stroke="${s}" stroke-width="1.3"/></svg></div>
            </div>
          </div>
        </div>
        <map-view></map-view>
      </div>
    </div></div></div>`;
  }
}
